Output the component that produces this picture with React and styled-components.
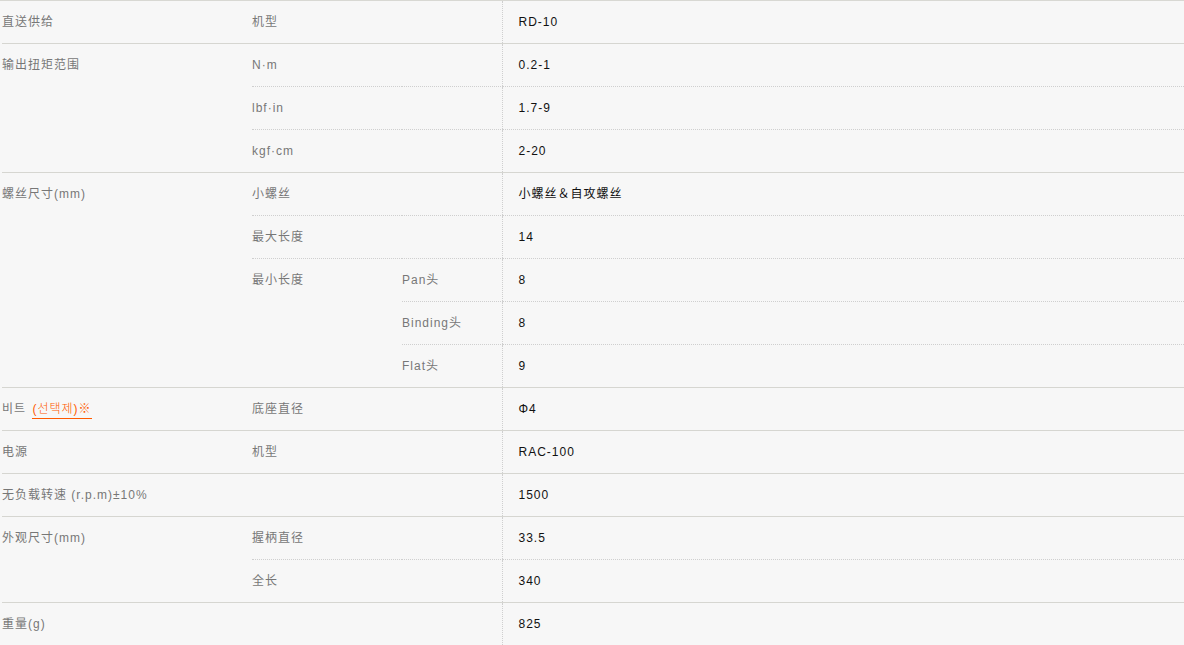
import styled, { createGlobalStyle } from "styled-components";

const GlobalStyle = createGlobalStyle`
  html, body {
    margin: 0;
    padding: 0;
    background: #f7f7f7;
  }
  body {
    font-family: "Liberation Sans", Arial, "Noto Sans CJK SC", "Noto Sans CJK KR", sans-serif;
  }
`;

const Wrapper = styled.div`
  width: 1184px;
  height: 645px;
  overflow: hidden;
  background: #f7f7f7;
  border-top: 1px solid #d8d8d3;
  box-sizing: border-box;
  padding-left: 2px;
`;

const SpecTable = styled.table`
  width: 1182px;
  border-collapse: collapse;
  table-layout: fixed;
  font-size: 12px;
  letter-spacing: 1px;
`;

const Row = styled.tr`
  height: 42px;
`;

const Cell = styled.td`
  padding: 0;
  height: 42px;
  line-height: 42px;
  vertical-align: top;
  white-space: nowrap;
  color: ${(p) => (p.value ? "#111" : "#777")};
  padding-left: ${(p) => (p.value ? "16px" : "0")};
  border-bottom: 1px ${(p) => (p.sub ? "dotted #cfcfcf" : "solid #d6d6d1")};
  border-left: ${(p) => (p.value ? "1px dotted #cfcfcf" : "none")};
`;

const Option = styled.span`
  margin-left: 2px;
  color: #ff5a00;
  font-weight: 300;
  border-bottom: 1px solid #ff5a00;
  padding-bottom: 2px;
`;

const App = () => {
  return (
    <>
      <GlobalStyle />
      <Wrapper>
        <SpecTable>
          <colgroup>
            <col style={{ width: 250 }} />
            <col style={{ width: 150 }} />
            <col style={{ width: 100 }} />
            <col />
          </colgroup>
          <tbody>
            <Row>
              <Cell>直送供给</Cell>
              <Cell colSpan={2}>机型</Cell>
              <Cell value>RD-10</Cell>
            </Row>

            <Row>
              <Cell rowSpan={3}>输出扭矩范围</Cell>
              <Cell colSpan={2} sub>N·m</Cell>
              <Cell value sub>0.2-1</Cell>
            </Row>
            <Row>
              <Cell colSpan={2} sub>lbf·in</Cell>
              <Cell value sub>1.7-9</Cell>
            </Row>
            <Row>
              <Cell colSpan={2}>kgf·cm</Cell>
              <Cell value>2-20</Cell>
            </Row>

            <Row>
              <Cell rowSpan={5}>螺丝尺寸(mm)</Cell>
              <Cell colSpan={2} sub>小螺丝</Cell>
              <Cell value sub>小螺丝＆自攻螺丝</Cell>
            </Row>
            <Row>
              <Cell colSpan={2} sub>最大长度</Cell>
              <Cell value sub>14</Cell>
            </Row>
            <Row>
              <Cell rowSpan={3}>最小长度</Cell>
              <Cell sub>Pan头</Cell>
              <Cell value sub>8</Cell>
            </Row>
            <Row>
              <Cell sub>Binding头</Cell>
              <Cell value sub>8</Cell>
            </Row>
            <Row>
              <Cell>Flat头</Cell>
              <Cell value>9</Cell>
            </Row>

            <Row>
              <Cell>
                비트 <Option>(선택제)※</Option>
              </Cell>
              <Cell colSpan={2}>底座直径</Cell>
              <Cell value>Φ4</Cell>
            </Row>

            <Row>
              <Cell>电源</Cell>
              <Cell colSpan={2}>机型</Cell>
              <Cell value>RAC-100</Cell>
            </Row>

            <Row>
              <Cell>无负载转速 (r.p.m)±10%</Cell>
              <Cell colSpan={2}></Cell>
              <Cell value>1500</Cell>
            </Row>

            <Row>
              <Cell rowSpan={2}>外观尺寸(mm)</Cell>
              <Cell colSpan={2} sub>握柄直径</Cell>
              <Cell value sub>33.5</Cell>
            </Row>
            <Row>
              <Cell colSpan={2}>全长</Cell>
              <Cell value>340</Cell>
            </Row>

            <Row>
              <Cell>重量(g)</Cell>
              <Cell colSpan={2}></Cell>
              <Cell value>825</Cell>
            </Row>
          </tbody>
        </SpecTable>
      </Wrapper>
    </>
  );
};

export default App;
